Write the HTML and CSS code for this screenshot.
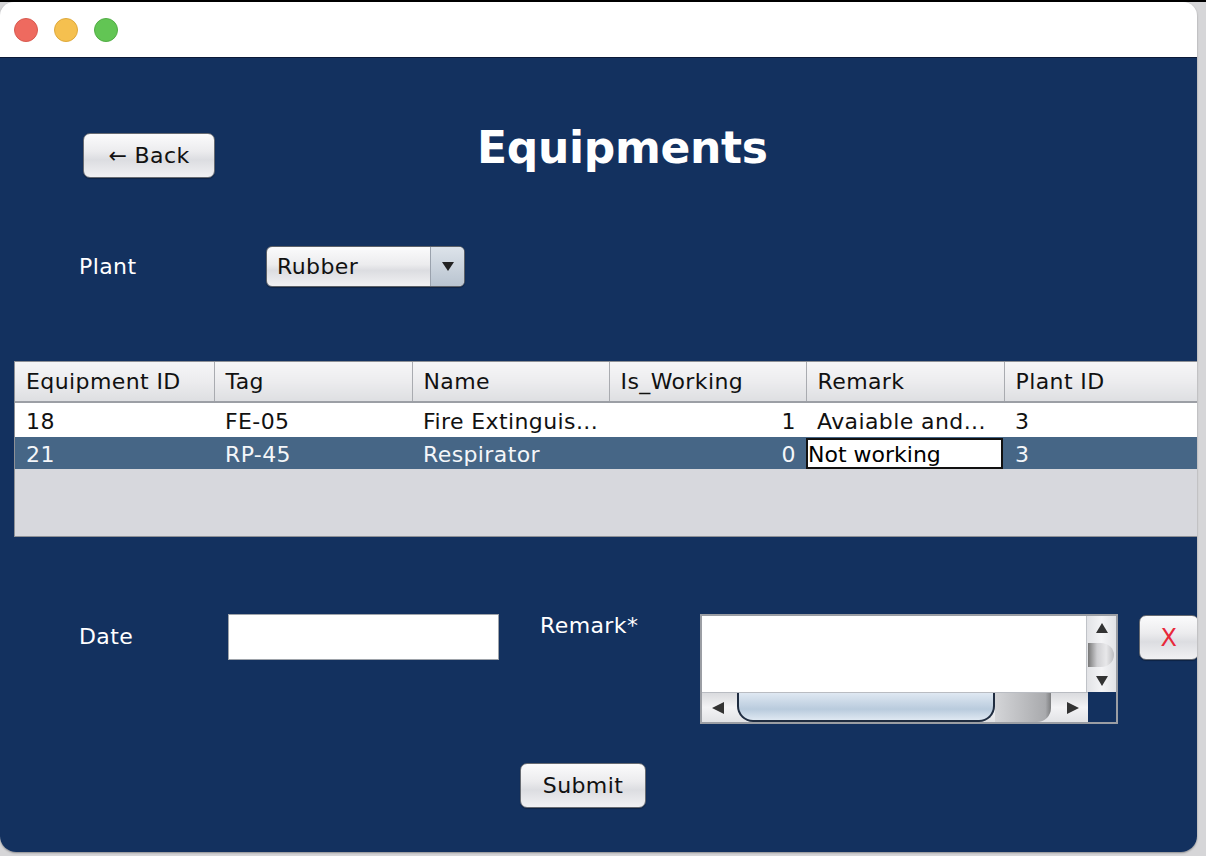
FILE: index.html
```html
<!DOCTYPE html>
<html>
<head>
<meta charset="utf-8">
<link rel="stylesheet" href="styles.css">
</head>
<body>
<div class="desk">
  <div class="deskstrip"></div>
  <div class="window">
    <div class="titlebar">
      <span class="light red"></span>
      <span class="light yellow"></span>
      <span class="light green"></span>
    </div>
    <div class="content">
      <div class="header">
        <button class="btn back">← Back</button>
        <h1 class="title">Equipments</h1>
      </div>
      <div class="plant-row">
        <span class="label plant-label">Plant</span>
        <div class="combo">
          <span class="combo-text">Rubber</span>
          <span class="combo-arrow"><svg width="12" height="10" viewBox="0 0 12 10"><path d="M0 1 L12 1 L6 10 Z" fill="#222"/></svg></span>
        </div>
      </div>
      <div class="table-wrap">
        <table class="grid">
          <colgroup>
            <col class="c1"><col class="c2"><col class="c3"><col class="c4"><col class="c5"><col class="c6">
          </colgroup>
          <thead>
            <tr><th>Equipment ID</th><th>Tag</th><th>Name</th><th>Is_Working</th><th>Remark</th><th>Plant ID</th></tr>
          </thead>
          <tbody>
            <tr class="r1"><td>18</td><td>FE-05</td><td>Fire Extinguis...</td><td class="num">1</td><td>Avaiable and...</td><td>3</td></tr>
            <tr class="r2 sel"><td>21</td><td>RP-45</td><td>Respirator</td><td class="num">0</td><td class="edit"><div class="editbox">Not working</div></td><td>3</td></tr>
          </tbody>
        </table>
        <div class="table-empty"></div>
      </div>
      <div class="form-row">
        <span class="label date-label">Date</span>
        <div class="input"></div>
        <span class="label remark-label">Remark*</span>
        <div class="scrollpane">
          <div class="sp-top">
            <div class="sp-area"></div>
            <div class="vbar">
              <svg class="arr" width="14" height="12" viewBox="0 0 14 12"><path d="M1 11 L7 1 L13 11 Z" fill="#333"/></svg>
              <div class="vthumb"></div>
              <svg class="arr" width="14" height="12" viewBox="0 0 14 12"><path d="M1 1 L13 1 L7 11 Z" fill="#333"/></svg>
            </div>
          </div>
          <div class="sp-bottom">
            <div class="hbar">
              <svg class="harr" width="14" height="14" viewBox="0 0 14 14"><path d="M13 1 L13 13 L1 7 Z" fill="#333"/></svg>
              <div class="hthumb"></div>
              <div class="hghost"></div>
              <svg class="harr right" width="14" height="14" viewBox="0 0 14 14"><path d="M1 1 L1 13 L13 7 Z" fill="#333"/></svg>
            </div>
            <div class="corner"></div>
          </div>
        </div>
        <button class="btn xbtn">X</button>
      </div>
      <div class="submit-row">
        <button class="btn submit">Submit</button>
      </div>
    </div>
  </div>
</div>
</body>
</html>
```
FILE: styles.css
```css
html, body {
  margin: 0;
  padding: 0;
}
body {
  width: 1206px;
  height: 856px;
  overflow: hidden;
  background: #d6d6d8;
  font-family: "DejaVu Sans", "Liberation Sans", sans-serif;
}
.desk {
  position: relative;
  width: 1206px;
  height: 856px;
}
.deskstrip {
  height: 2px;
  background: #000;
}
.window {
  width: 1197px;
  height: 850px;
  border-radius: 14px 14px 16px 16px;
  overflow: hidden;
  display: flex;
  flex-direction: column;
  box-shadow: 0 1px 2px rgba(0,0,0,0.35);
}
.titlebar {
  height: 55px;
  background: #fff;
  border-bottom: 1px solid #0b1a38;
  display: flex;
  align-items: center;
  padding-left: 14px;
  gap: 16px;
  flex: none;
}
.light {
  width: 24px;
  height: 24px;
  border-radius: 50%;
  box-sizing: border-box;
}
.red { background: #ee6a5f; border: 1px solid #d85a50; }
.yellow { background: #f5c04f; border: 1px solid #dea93c; }
.green { background: #62c554; border: 1px solid #52ad45; }
.content {
  flex: 1;
  background: #13315f;
  display: flex;
  flex-direction: column;
}
.btn {
  font-family: "DejaVu Sans", "Liberation Sans", sans-serif;
  font-size: 22px;
  letter-spacing: 0.4px;
  color: #111;
  border: 1px solid #676b72;
  border-radius: 7px;
  background: linear-gradient(#fbfbfc 0%, #ececee 40%, #dcdde1 60%, #f1f1f3 100%);
  box-shadow: 0 1px 1px rgba(0,0,0,0.3);
  padding: 0;
  box-sizing: border-box;
  flex: none;
}
.header {
  display: flex;
  align-items: center;
  margin-top: 74px;
  height: 46px;
  padding-left: 83px;
}
.back {
  width: 132px;
  height: 45px;
}
.title {
  margin: 0 0 0 262px;
  font-size: 44px;
  font-weight: bold;
  letter-spacing: -0.3px;
  color: #fff;
  line-height: 46px;
  position: relative;
  top: -7px;
}
.label {
  color: #fff;
  font-size: 22px;
  letter-spacing: 0.4px;
  flex: none;
}
.plant-row {
  display: flex;
  align-items: center;
  margin-top: 67px;
  padding-left: 79px;
  height: 42px;
}
.plant-label {
  width: 187px;
}
.combo {
  flex: none;
  width: 199px;
  height: 41px;
  box-sizing: border-box;
  border: 1px solid #5d6168;
  border-radius: 6px;
  background: linear-gradient(#fbfbfc 0%, #ececee 45%, #dcdde1 60%, #f1f1f3 100%);
  display: flex;
  overflow: hidden;
  box-shadow: 0 1px 1px rgba(0,0,0,0.3);
}
.combo-text {
  flex: 1;
  font-size: 22px;
  letter-spacing: 0.4px;
  color: #111;
  padding-left: 10px;
  line-height: 39px;
}
.combo-arrow {
  width: 33px;
  border-left: 1px solid #9aa2ad;
  background: linear-gradient(#dde3ea, #b9c4d0);
  display: flex;
  align-items: center;
  justify-content: center;
}
.table-wrap {
  margin-top: 74px;
  margin-left: 14px;
  width: 1190px;
  height: 176px;
  box-sizing: border-box;
  border: 1px solid #8d9096;
  border-right: none;
  background: #d7d8dd;
  display: flex;
  flex-direction: column;
}
.grid {
  border-collapse: collapse;
  table-layout: fixed;
  width: 1188px;
  font-size: 22px;
  letter-spacing: 0.4px;
}
.c1 { width: 199px; }
.c2 { width: 198px; }
.c3 { width: 197px; }
.c4 { width: 197px; }
.c5 { width: 198px; }
.c6 { width: 199px; }
.grid th {
  height: 40px;
  box-sizing: border-box;
  text-align: left;
  font-weight: normal;
  color: #111;
  padding: 0 0 0 11px;
  background: linear-gradient(#f6f6f7 0%, #ececee 50%, #dedfe2 100%);
  border-right: 1px solid #a9abb0;
  border-bottom: 2px solid #9c9fa5;
  white-space: nowrap;
}
.grid td {
  padding: 2px 0 0 11px;
  color: #111;
  white-space: nowrap;
  overflow: hidden;
}
.r1 td {
  height: 32px;
  background: #fff;
}
.r2 td {
  height: 30px;
  background: #466686;
  color: #f4f6f9;
}
.grid td.num {
  text-align: right;
  padding: 2px 10px 0 0;
}
.grid td.edit {
  padding: 0;
}
.editbox {
  box-sizing: border-box;
  height: 31px;
  margin-right: 1px;
  background: #fff;
  border: 2px solid #111;
  color: #000;
  padding-left: 0;
  letter-spacing: 0;
  line-height: 29px;
}
.table-empty { flex: 1; }
.form-row {
  display: flex;
  align-items: flex-start;
  margin-top: 77px;
  height: 110px;
}
.date-label {
  margin-left: 79px;
  margin-top: 10px;
  width: 149px;
}
.input {
  flex: none;
  width: 271px;
  height: 46px;
  box-sizing: border-box;
  background: #fff;
  border: 1px solid #9ea3aa;
}
.remark-label {
  margin-left: 41px;
  margin-top: -1px;
  width: 160px;
}
.scrollpane {
  flex: none;
  width: 418px;
  height: 110px;
  box-sizing: border-box;
  border: 2px solid #9b9ea4;
  display: flex;
  flex-direction: column;
  background: #13315f;
}
.sp-top {
  display: flex;
  height: 76px;
}
.sp-area {
  flex: 1;
  background: #fff;
}
.vbar {
  width: 30px;
  box-sizing: border-box;
  border-left: 1px solid #c0c3c8;
  background: linear-gradient(90deg, #e2e3e6, #f4f4f6, #e2e3e6);
  display: flex;
  flex-direction: column;
  align-items: center;
  justify-content: space-between;
  padding: 6px 0 5px;
  position: relative;
}
.vthumb {
  width: 26px;
  height: 24px;
  margin-left: -2px;
  border-radius: 0 50% 50% 0 / 0 50% 50% 0;
  background: linear-gradient(90deg, #777 0%, #cfcfd2 35%, #e8e8ea 70%, #bdbdc0 100%);
}
.sp-bottom {
  display: flex;
  height: 30px;
}
.hbar {
  width: 386px;
  box-sizing: border-box;
  border-top: 1px solid #b9bcc2;
  background: linear-gradient(#dadbde, #f3f3f5 50%, #e2e3e6);
  display: flex;
  align-items: center;
  padding-left: 9px;
  position: relative;
}
.harr { flex: none; }
.hthumb {
  flex: none;
  margin-left: 12px;
  width: 258px;
  height: 29px;
  box-sizing: border-box;
  border: 2px solid #1f2c40;
  border-top: none;
  border-radius: 0 0 16px 16px;
  background: linear-gradient(#dfe8f2, #b9cbdd 60%, #dfe8f2);
  align-self: flex-start;
}
.hghost {
  flex: none;
  width: 56px;
  height: 29px;
  align-self: flex-start;
  border-radius: 0 0 14px 0;
  background: linear-gradient(90deg, #d4d5d8, #a9aaad 90%, #7d7e80);
}
.harr.right { margin-left: 15px; }
.corner {
  flex: 1;
  background: #13315f;
}
.xbtn {
  margin-left: 21px;
  margin-top: 1px;
  width: 60px;
  height: 45px;
  color: #e8283a;
  font-size: 24px;
}
.submit-row {
  margin-top: 39px;
  padding-left: 520px;
}
.submit {
  width: 126px;
  height: 45px;
}
```
